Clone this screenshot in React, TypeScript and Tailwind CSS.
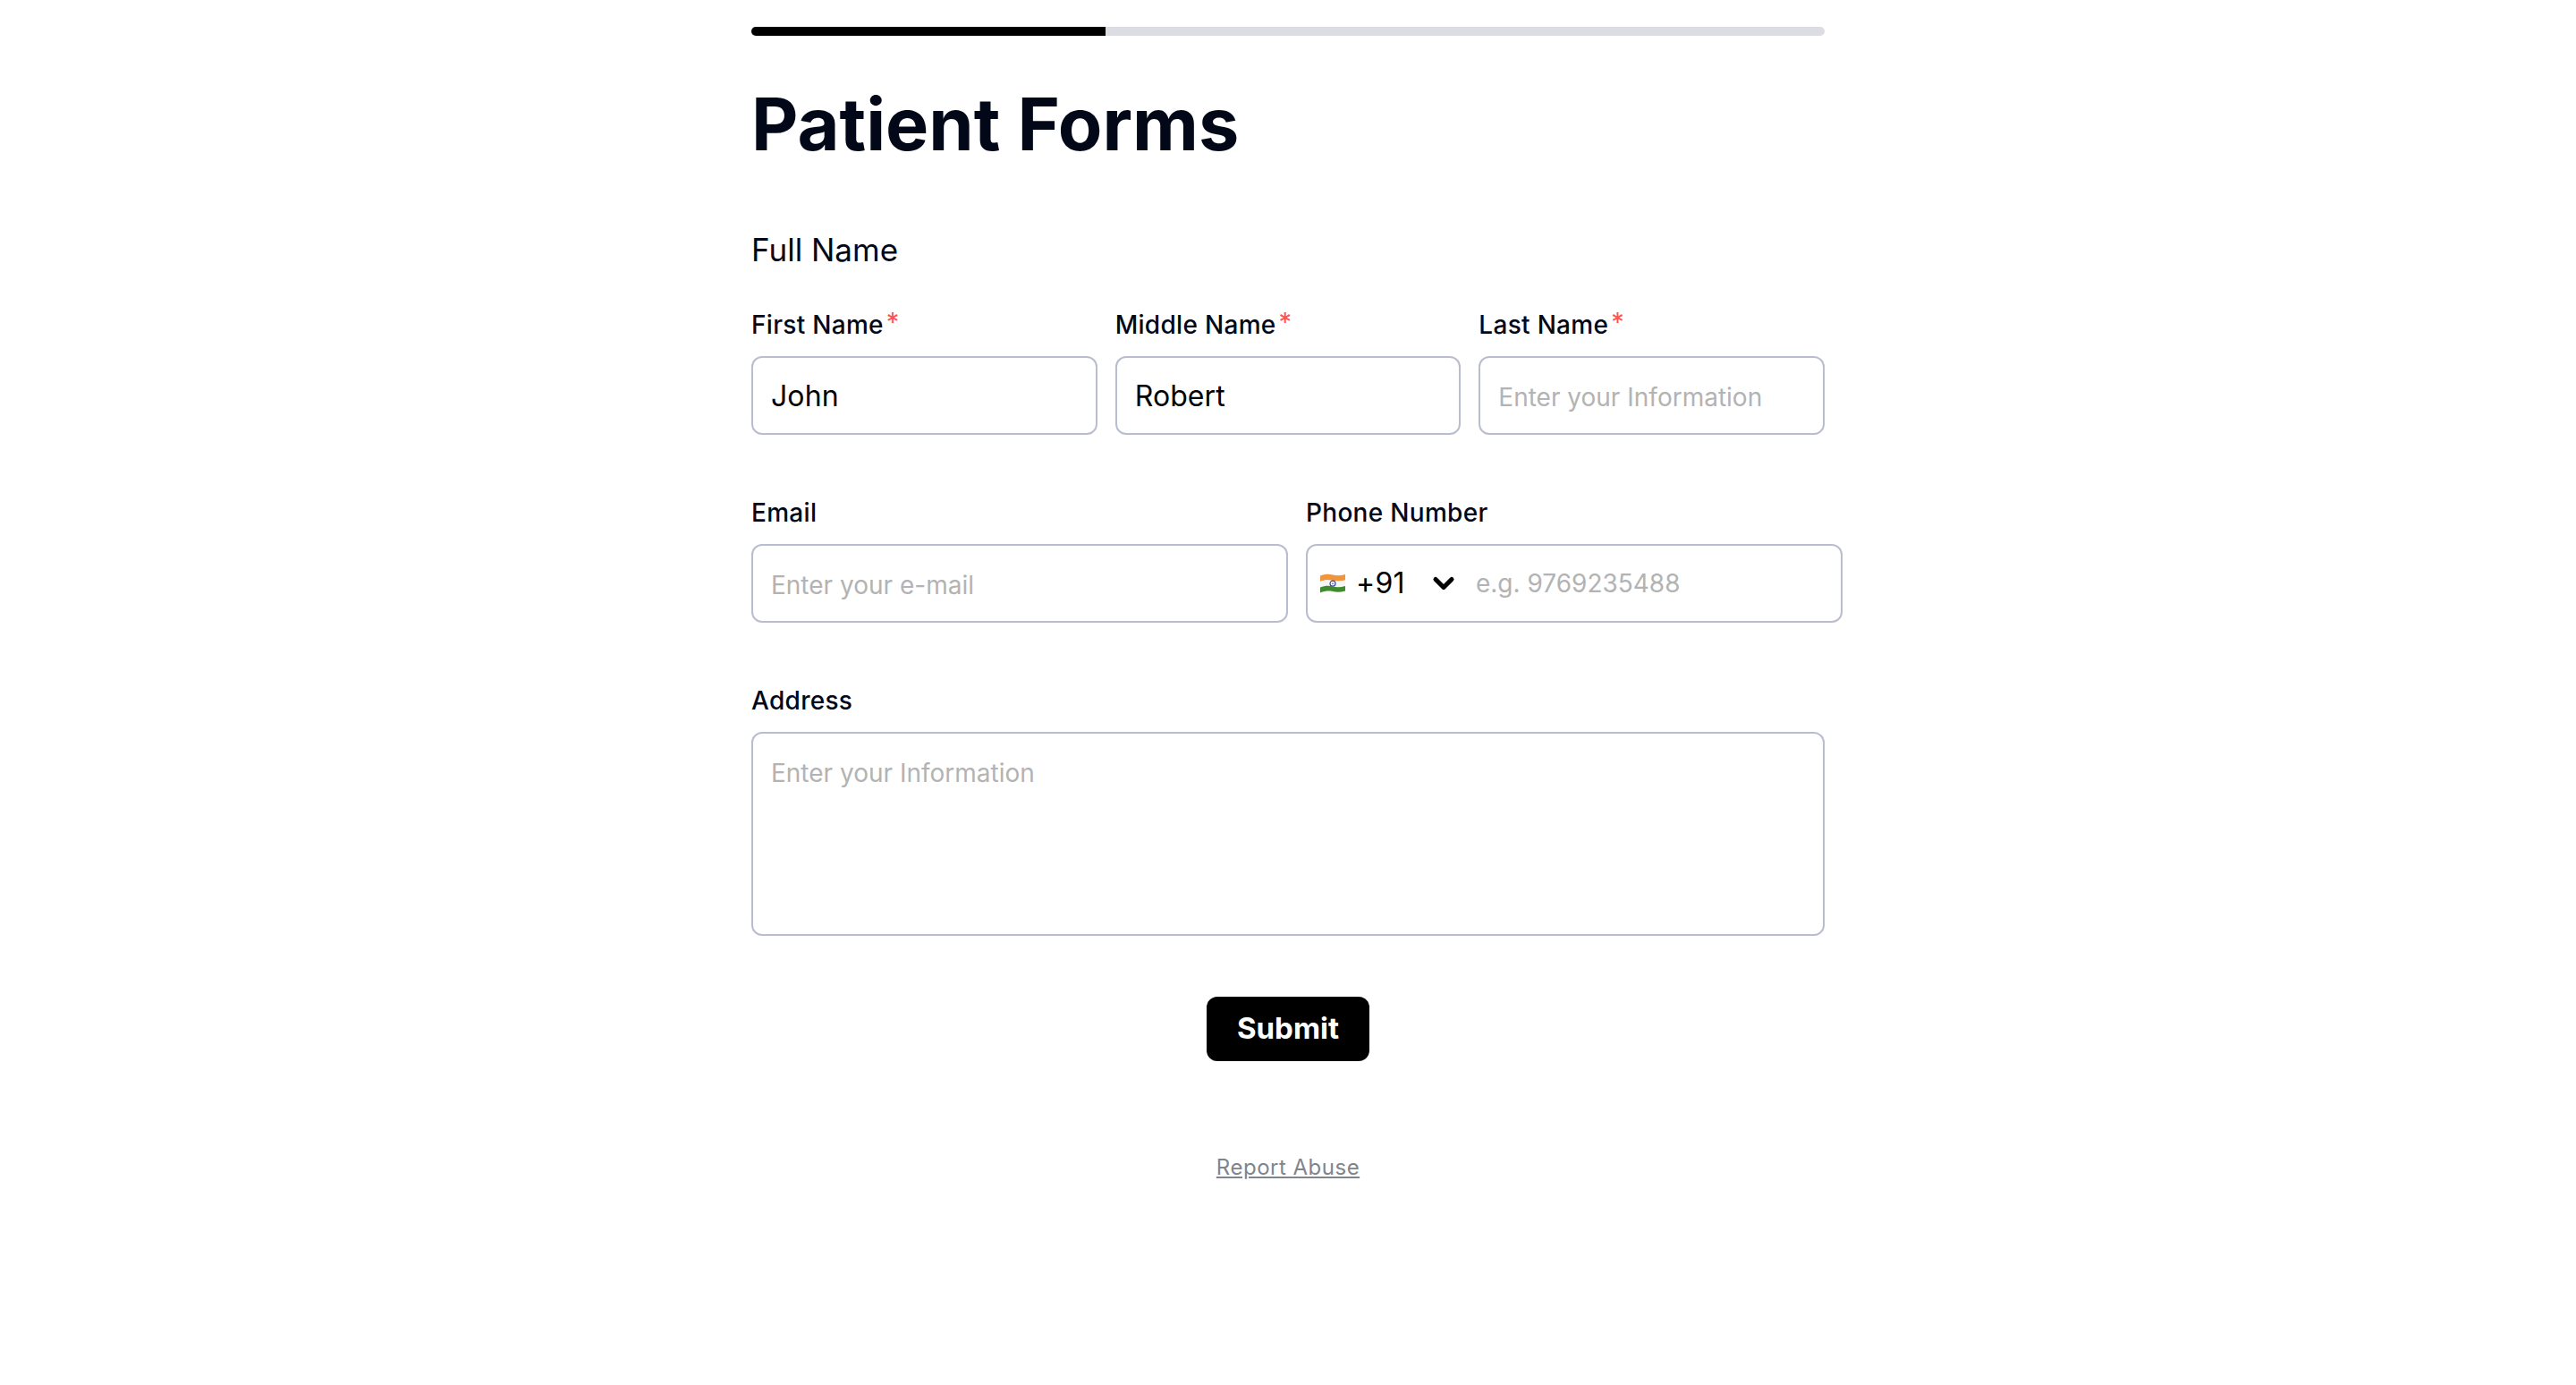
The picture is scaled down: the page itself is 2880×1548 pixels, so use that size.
import React from 'react';
import { ChevronDown } from 'lucide-react';

const inputClass =
  'w-full h-[88px] rounded-[12px] border-2 border-[#b9bdcf] bg-white px-[20px] text-[32px] tracking-[0.1px] text-black outline-none placeholder:text-[#b3b3b3] placeholder:text-[28px] placeholder:tracking-normal';

const Label: React.FC<{ text: string; required?: boolean }> = ({ text, required }) => (
  <label className="flex h-[40px] items-center text-[28px] font-[450] tracking-[0.3px] text-[#020817] leading-none">
    {text}
    {required && <span className="-mt-[8px] ml-[3px] text-[#ff5252] text-[29px] font-normal">*</span>}
  </label>
);

const IndiaFlag = () => (
  <svg width="28" height="22" viewBox="0 0 28 22" className="shrink-0">
    <path d="M0 2.500C5 0.500 10 0.500 14 1.500S23 2.500 28 1V7.500C23 9 18 8.500 14 8S5 7 0 9Z" fill="#f0953a" />
    <path d="M0 9C5 7 10 7 14 8S23 9 28 7.500V14C23 15.500 18 15 14 14.500S5 13.500 0 15.500Z" fill="#f5f5f5" />
    <path d="M0 15.500C5 13.500 10 13.500 14 14.500S23 15.500 28 14V19.500C23 21 18 21 14 20S5 19.500 0 21.500Z" fill="#3f8a2e" />
    <circle cx="14" cy="11.200" r="3" fill="none" stroke="#3a4a9c" strokeWidth="1.200" />
    <circle cx="14" cy="11.200" r="0.800" fill="#3a4a9c" />
  </svg>
);

const App: React.FC = () => {
  return (
    <div className="min-h-[1548px] bg-white font-['Inter',sans-serif]">
      <div className="mx-auto w-[1200px] pt-[30px]">
        <div className="h-[10px] w-full rounded-full bg-[#dcdde3] overflow-hidden">
          <div className="h-full w-[396px] bg-black" />
        </div>

        <h1 className="mt-[49px] text-[81px] font-bold leading-[100px] text-[#020817]">Patient Forms</h1>

        <h2 className="mt-[68px] text-[35px] leading-[44px] font-normal text-[#020817]">Full Name</h2>

        <div className="mt-[42px] grid grid-cols-3 gap-x-[20px]">
          <div>
            <Label text="First Name" required />
            <input className={`${inputClass} mt-[15px]`} defaultValue="John" />
          </div>
          <div>
            <Label text="Middle Name" required />
            <input className={`${inputClass} mt-[15px]`} defaultValue="Robert" />
          </div>
          <div>
            <Label text="Last Name" required />
            <input className={`${inputClass} mt-[15px]`} placeholder="Enter your Information" />
          </div>
        </div>

        <div className="mt-[67px] grid grid-cols-[600px_600px] gap-x-[20px]">
          <div>
            <Label text="Email" />
            <input className={`${inputClass} mt-[15px]`} placeholder="Enter your e-mail" />
          </div>
          <div>
            <Label text="Phone Number" />
            <div className="mt-[15px] flex h-[88px] items-center rounded-[12px] border-2 border-[#b9bdcf] bg-white pl-[14px]">
              <IndiaFlag />
              <span className="ml-[12px] text-[32px] tracking-[0.3px] text-black">+91</span>
              <ChevronDown className="ml-[25px] h-[36px] w-[36px] text-black" strokeWidth={3.4} />
              <input
                className="ml-[18px] flex-1 min-w-0 text-[28px] outline-none placeholder:text-[#b3b3b3]"
                placeholder="e.g. 9769235488"
              />
            </div>
          </div>
        </div>

        <div className="mt-[67px]">
          <Label text="Address" />
          <textarea
            className="mt-[15px] block h-[228px] w-full resize-none rounded-[12px] border-2 border-[#b9bdcf] bg-white px-[20px] py-[25px] text-[28px] leading-[38px] outline-none placeholder:text-[#b3b3b3]"
            placeholder="Enter your Information"
          />
        </div>

        <div className="mt-[68px] flex justify-center">
          <button className="h-[72px] w-[182px] rounded-[12px] bg-black text-[33px] font-bold text-white">Submit</button>
        </div>

        <div className="mt-[103px] flex justify-center">
          <a className="text-[24px] leading-[32px] text-[#80858c] underline tracking-[0.5px]">Report Abuse</a>
        </div>
      </div>
    </div>
  );
};

export default App;
